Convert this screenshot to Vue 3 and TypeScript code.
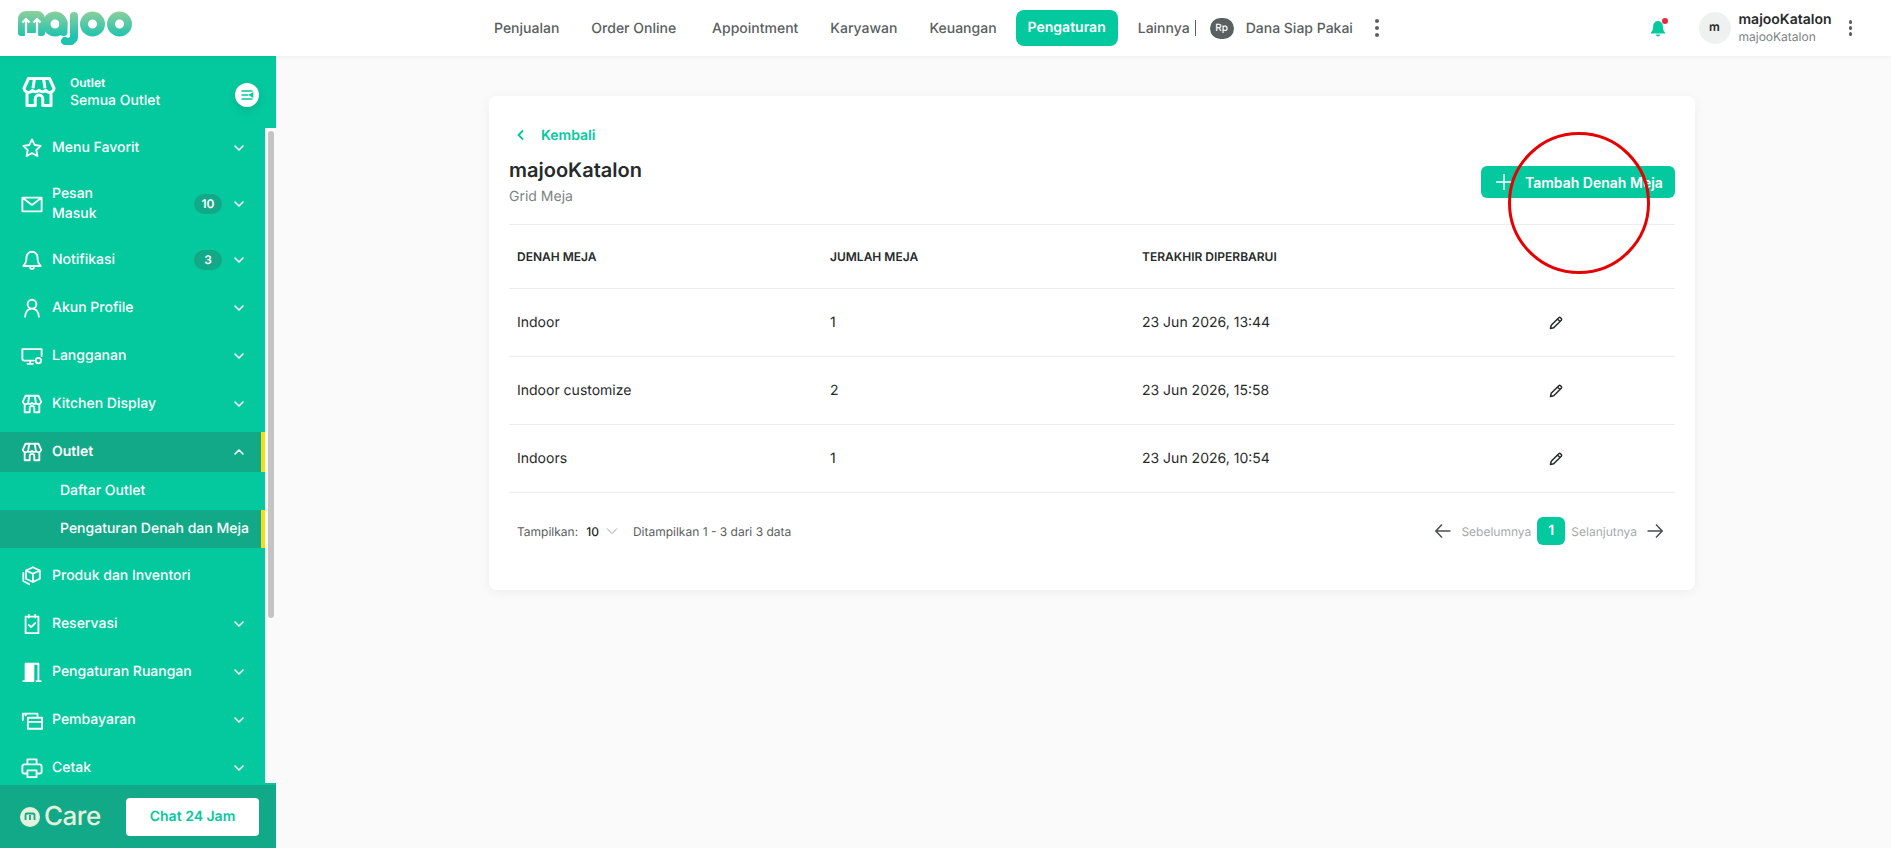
<script setup lang="ts">
interface MenuItem {
  label: string;
  icon: string;
  chevron?: boolean;
  badge?: string;
  wrap?: boolean;
}

const topNav = ['Penjualan', 'Order Online', 'Appointment', 'Karyawan', 'Keuangan'];

const upperMenu: MenuItem[] = [
  { label: 'Menu Favorit', icon: 'star', chevron: true },
  { label: 'Pesan Masuk', icon: 'mail', chevron: true, badge: '10', wrap: true },
  { label: 'Notifikasi', icon: 'bell', chevron: true, badge: '3' },
  { label: 'Akun Profile', icon: 'user', chevron: true },
  { label: 'Langganan', icon: 'monitor', chevron: true },
  { label: 'Kitchen Display', icon: 'store', chevron: true }
];

const lowerMenu: MenuItem[] = [
  { label: 'Produk dan Inventori', icon: 'box' },
  { label: 'Reservasi', icon: 'clip', chevron: true },
  { label: 'Pengaturan Ruangan', icon: 'door', chevron: true },
  { label: 'Pembayaran', icon: 'card', chevron: true },
  { label: 'Cetak', icon: 'print', chevron: true }
];

const iconPaths: Record<string, string> = {
  star: 'M12 2.600l2.900 6.100 6.600.9-4.800 4.600 1.200 6.600L12 17.600l-5.900 3.200 1.200-6.600-4.800-4.600 6.600-.9z',
  mail: 'M1.500 5h21v15h-21zM2 5.500l10 7.500 10-7.500',
  bell: 'M12 3a6 6 0 0 0-6 6c0 5-1 7-3.500 9.500h19C19 16 18 14 18 9a6 6 0 0 0-6-6zM10 20.500a2.200 2.200 0 0 0 4 0',
  user: 'M12 3a4.800 4.800 0 1 0 0 9.600A4.800 4.800 0 0 0 12 3zM4.500 21.500c.5-5.500 3.500-8.900 7.500-8.900s7 3.400 7.500 8.900',
  monitor: 'M14 17H3.500a2 2 0 0 1-2-2V4.500h21V12M7 20.500h6M10 17v3.500M19 14a3 3 0 1 0 0 6 3 3 0 0 0 0-6z',
  store: 'M5 3h14l3 6.500a3 3 0 0 1-5.500 1.400 3.400 3.400 0 0 1-4.500 0 3.400 3.400 0 0 1-4.500 0A3 3 0 0 1 2 9.500zM4 12.500V21h5.500v-4.500a2.500 2.500 0 0 1 5 0V21H20v-8.500M9 3L8 9.500M15 3l1 6.500',
  box: 'M13 2.500l7.500 3.500v9L13 18.500 5.500 15V6zM5.500 6l7.500 3.500L20.500 6M13 9.500v9M2.500 8.500v9l6.500 3.500',
  clip: 'M5 4h14v18H5zM8.500 2v3M15.500 2v3M8.500 13l2.500 2.500 4.500-4.500',
  door: 'M13.500 3H19v18.500M2.500 22h10M17 22h4.500',
  card: 'M7.500 9.500H23v12H7.500zM7.500 14h15.500M2 12V5h16v2.500M5 5v2',
  print: 'M7 8V2.500h10V8M6.500 18H3.500A2 2 0 0 1 1.500 16v-5.500A2.500 2.500 0 0 1 4 8h16a2.500 2.500 0 0 1 2.500 2.500V16a2 2 0 0 1-2 2h-3M7 14.500h10V22H7z'
};

const rows = [
  { name: 'Indoor', count: 1, updated: '23 Jun 2026, 13:44' },
  { name: 'Indoor customize', count: 2, updated: '23 Jun 2026, 15:58' },
  { name: 'Indoors', count: 1, updated: '23 Jun 2026, 10:54' }
];
</script>

<template>
  <div class="page">
    <header class="topbar">
      <svg class="logo" viewBox="0 0 120 34" width="120" height="34">
        <defs>
          <linearGradient id="logoGrad" gradientUnits="userSpaceOnUse" x1="0" y1="0" x2="0" y2="26">
            <stop offset="0" stop-color="#8fcf9c" />
            <stop offset="1" stop-color="#1cc4ae" />
          </linearGradient>
        </defs>
        <path fill="url(#logoGrad)" d="M2 22V8a8 8 0 0 1 8-8h11a8 8 0 0 1 8 8v14a3 3 0 0 1-3 3h-2a3 3 0 0 1-3-3H11a3 3 0 0 1-3 3H5a3 3 0 0 1-3-3z" />
        <g fill="none" stroke="url(#logoGrad)" stroke-width="8" stroke-linecap="round">
          <circle cx="39" cy="13" r="8.500" />
          <path d="M47.500 12v9" />
          <path d="M58 5v19a6 6 0 0 1-9 6" />
          <circle cx="76.500" cy="13" r="8.500" />
          <circle cx="103.500" cy="13" r="8.500" />
        </g>
        <g fill="none" stroke="#fff" stroke-width="2.200">
          <path d="M10 26V8M6.500 11.500L10 8l3.500 3.500" />
          <path d="M21 26V8M17.500 11.500L21 8l3.500 3.500" />
        </g>
      </svg>

      <nav class="topnav">
        <a v-for="item in topNav" :key="item" class="topnav-link">{{ item }}</a>
        <a class="topnav-link active">Pengaturan</a>
        <span class="topnav-more">Lainnya <i class="divider"></i></span>
        <span class="rp">Rp</span>
        <span class="topnav-dana">Dana Siap Pakai</span>
        <span class="dots"><i></i><i></i><i></i></span>
      </nav>

      <div class="top-right">
        <span class="bell">
          <svg viewBox="0 0 20 20" width="20" height="20">
            <path fill="#04c99e" d="M10 3a4.800 4.800 0 0 0-4.800 4.800c0 3.600-.7 5.300-2.200 6.700v1h14v-1c-1.500-1.400-2.200-3.100-2.200-6.700A4.800 4.800 0 0 0 10 3zM8 16.500a2 2 0 0 0 4 0z" />
          </svg>
          <i class="bell-dot"></i>
        </span>
        <span class="avatar">m</span>
        <div class="user-text">
          <div class="user-name">majooKatalon</div>
          <div class="user-sub">majooKatalon</div>
        </div>
        <span class="dots small"><i></i><i></i><i></i></span>
      </div>
    </header>

    <div class="body">
      <aside class="sidebar">
        <div class="outlet-box">
          <svg class="outlet-icon" viewBox="0 0 24 24" width="36" height="36">
            <path :d="iconPaths.store" />
          </svg>
          <div class="outlet-text">
            <div class="outlet-small">Outlet</div>
            <div class="outlet-name">Semua Outlet</div>
          </div>
          <span class="collapse-btn">
            <svg viewBox="0 0 16 16" width="16" height="16">
              <path d="M2.500 4h11M2.500 8h7M2.500 12h11" />
              <path d="M13.500 6.500L11 8l2.500 1.500z" />
            </svg>
          </span>
        </div>

        <div class="menu-wrap">
          <div class="menu">
            <div v-for="item in upperMenu" :key="item.label" class="menu-item">
              <svg class="menu-icon" viewBox="0 0 24 24" width="22" height="22"><path :d="iconPaths[item.icon]" /></svg>
              <span class="menu-label" :class="{ wrap: item.wrap }">{{ item.label }}</span>
              <span v-if="item.badge" class="badge">{{ item.badge }}</span>
              <svg v-if="item.chevron" class="chev" viewBox="0 0 12 12" width="12" height="12"><path d="M2 4l4 4 4-4" /></svg>
            </div>

            <div class="menu-group">
              <div class="menu-item current">
                <svg class="menu-icon" viewBox="0 0 24 24" width="22" height="22"><path :d="iconPaths.store" /></svg>
                <span class="menu-label bold">Outlet</span>
                <svg class="chev" viewBox="0 0 12 12" width="12" height="12"><path d="M2 8l4-4 4 4" /></svg>
              </div>
              <div class="sub-item">Daftar Outlet</div>
              <div class="sub-item current">Pengaturan Denah dan Meja</div>
            </div>

            <div v-for="item in lowerMenu" :key="item.label" class="menu-item">
              <svg class="menu-icon" viewBox="0 0 24 24" width="22" height="22">
                <path :d="iconPaths[item.icon]" />
                <path v-if="item.icon === 'door'" class="door-leaf" d="M5 22V3h8.500v19zM10.500 12v1.500" />
              </svg>
              <span class="menu-label">{{ item.label }}</span>
              <svg v-if="item.chevron" class="chev" viewBox="0 0 12 12" width="12" height="12"><path d="M2 4l4 4 4-4" /></svg>
            </div>
          </div>
          <div class="track"><div class="thumb"></div></div>
        </div>

        <div class="care">
          <span class="care-logo">
            <svg viewBox="0 0 20 20" width="20" height="20">
              <circle cx="10" cy="10" r="10" fill="#e4f1dc" />
              <path d="M5.500 13V8a1.500 1.500 0 0 1 1.500-1.500h5.500A2 2 0 0 1 14.500 8.500V13M10 8v5" fill="none" stroke="#12a988" stroke-width="1.800" />
            </svg>
            <span class="care-text">Care</span>
          </span>
          <a class="chat-btn">Chat 24 Jam</a>
        </div>
      </aside>

      <main class="main">
        <section class="card">
          <a class="back">
            <svg viewBox="0 0 12 12" width="12" height="12"><path d="M8 1.500L3.500 6 8 10.500" /></svg>
            Kembali
          </a>
          <div class="title-row">
            <div>
              <h1>majooKatalon</h1>
              <p>Grid Meja</p>
            </div>
            <button class="add-btn" type="button">
              <svg viewBox="0 0 16 16" width="16" height="16"><path d="M8 0v16M0 8h16" /></svg>
              Tambah Denah Meja
            </button>
          </div>

          <div class="table">
            <div class="tr head">
              <div>Denah Meja</div>
              <div>Jumlah Meja</div>
              <div>Terakhir Diperbarui</div>
              <div></div>
            </div>
            <div v-for="row in rows" :key="row.name" class="tr">
              <div>{{ row.name }}</div>
              <div>{{ row.count }}</div>
              <div>{{ row.updated }}</div>
              <div class="edit">
                <svg viewBox="0 0 16 16" width="16" height="16">
                  <path d="M2.500 13.500l.7-3.200 7.600-7.600a1.200 1.200 0 0 1 1.700 0l.800.800a1.200 1.200 0 0 1 0 1.700l-7.600 7.600zM9.500 4l2.500 2.500" />
                </svg>
              </div>
            </div>
          </div>

          <div class="pager">
            <span class="muted">Tampilkan:</span>
            <span class="size">10</span>
            <svg class="size-chev" viewBox="0 0 12 12" width="12" height="12"><path d="M1 3.500l5 5 5-5" /></svg>
            <span class="muted">Ditampilkan 1 - 3 dari 3 data</span>
            <span class="spacer"></span>
            <svg class="arrow" viewBox="0 0 16 16" width="16" height="16"><path d="M15.500 8H.8M7 1.500L.8 8 7 14.500" /></svg>
            <span class="page-text first">Sebelumnya</span>
            <span class="page-num">1</span>
            <span class="page-text">Selanjutnya</span>
            <svg class="arrow last" viewBox="0 0 16 16" width="16" height="16"><path d="M.5 8h14.700M9 1.500L15.200 8 9 14.500" /></svg>
          </div>

          <div class="red-ring"></div>
        </section>
      </main>
    </div>
  </div>
</template>

<style>
html,
body {
  margin: 0;
  overflow: hidden;
}
</style>

<style scoped>
.page {
  width: 1891px;
  height: 848px;
  display: flex;
  flex-direction: column;
  background: #fafafa;
  font-family: Inter, "Noto Sans", sans-serif;
  text-rendering: geometricPrecision;
  color: #272a2a;
  overflow: hidden;
}

.topbar {
  height: 56px;
  flex: none;
  display: flex;
  align-items: center;
  background: #fff;
  box-shadow: 0 1px 4px rgba(0, 0, 0, 0.06);
  position: relative;
  z-index: 2;
}

.logo {
  margin-left: 16px;
  flex: none;
}

.topnav {
  display: flex;
  align-items: center;
  margin-left: 358px;
  font-size: 14px;
  font-weight: 500;
  color: #5a6060;
}

.topnav-link {
  margin-right: 32px;
  white-space: nowrap;
}

.topnav-link:nth-child(2) {
  margin-right: 36px;
}

.topnav-link.active {
  margin-left: -13px;
  margin-right: 20px;
  padding: 0 12px;
  height: 36px;
  line-height: 36px;
  border-radius: 8px;
  background: #04c99e;
  color: #fff;
  font-weight: 600;
}

.topnav-more {
  display: flex;
  align-items: center;
  gap: 5px;
  white-space: nowrap;
}

.divider {
  width: 1px;
  height: 16px;
  background: #5a6060;
}

.rp {
  margin-left: 14px;
  width: 24px;
  height: 21px;
  border-radius: 12px;
  background: #5a6060;
  color: #fff;
  font-size: 10px;
  line-height: 21px;
  text-align: center;
}

.topnav-dana {
  margin-left: 12px;
  white-space: nowrap;
}

.dots {
  margin-left: 22px;
  display: flex;
  flex-direction: column;
  gap: 3px;
}

.dots i {
  width: 4px;
  height: 4px;
  border-radius: 50%;
  background: #5a6060;
}

.dots.small {
  margin-left: 0;
  gap: 2.500px;
}

.dots.small i {
  width: 3.500px;
  height: 3.500px;
}

.top-right {
  margin-left: auto;
  display: flex;
  align-items: center;
  padding-right: 39px;
}

.bell {
  position: relative;
  display: flex;
  margin-right: 31px;
}

.bell-dot {
  position: absolute;
  top: 0;
  right: 0;
  width: 6px;
  height: 6px;
  border-radius: 50%;
  background: #e8283c;
}

.avatar {
  width: 32px;
  height: 32px;
  border-radius: 50%;
  background: #eff1f1;
  font-size: 12px;
  font-weight: 600;
  line-height: 30px;
  text-align: center;
}

.user-text {
  margin-left: 8px;
  width: 110px;
}

.user-name {
  font-size: 14px;
  font-weight: 600;
  line-height: 18px;
}

.user-sub {
  font-size: 12px;
  line-height: 16px;
  color: #7c8383;
}

.body {
  flex: 1;
  min-height: 0;
  display: flex;
}

.sidebar {
  width: 276px;
  flex: none;
  display: flex;
  flex-direction: column;
  background: #04c99e;
  color: #fff;
  font-size: 14px;
  font-weight: 500;
}

.outlet-box {
  height: 72px;
  flex: none;
  display: flex;
  align-items: center;
  padding: 0 17px 0 21px;
  box-sizing: border-box;
}

.outlet-icon {
  fill: none;
  stroke: #fff;
  stroke-width: 2;
  stroke-linejoin: round;
  flex: none;
}

.outlet-text {
  margin-left: 13px;
  flex: 1;
}

.outlet-small {
  font-size: 12px;
  font-weight: 600;
  line-height: 18px;
}

.outlet-name {
  font-size: 14px;
  line-height: 18px;
}

.collapse-btn {
  width: 24px;
  height: 24px;
  margin-top: 6px;
  border-radius: 50%;
  background: #fff;
  box-shadow: 0 3px 8px rgba(0, 0, 0, 0.12);
  display: flex;
  align-items: center;
  justify-content: center;
}

.collapse-btn path {
  stroke: #04c99e;
  stroke-width: 1.600;
  fill: #04c99e;
}

.menu-wrap {
  height: 655px;
  flex: none;
  display: flex;
  overflow: hidden;
}

.menu {
  width: 265px;
  flex: none;
  display: flex;
  flex-direction: column;
  gap: 8px;
}

.track {
  flex: 1;
  background: #fafafa;
  padding: 3px 2px 0 3px;
}

.thumb {
  height: 487px;
  border-radius: 3px;
  background: #c4c4c4;
}

.menu-item {
  min-height: 40px;
  flex: none;
  display: flex;
  align-items: center;
  padding: 0 20px 0 21px;
  box-sizing: border-box;
}

.menu-icon {
  flex: none;
  fill: none;
  stroke: #fff;
  stroke-width: 2;
  stroke-linejoin: round;
  stroke-linecap: round;
}

.door-leaf {
  fill: #fff;
}

.menu-label {
  margin-left: 9px;
  margin-right: auto;
  white-space: nowrap;
  line-height: 20px;
}

.menu-label.wrap {
  width: 60px;
  white-space: normal;
  padding: 8px 0;
}

.menu-label.bold {
  font-weight: 600;
}

.badge {
  min-width: 28px;
  height: 20px;
  border-radius: 10px;
  background: #12a988;
  font-size: 12px;
  font-weight: 600;
  line-height: 20px;
  text-align: center;
  margin-right: 11px;
}

.chev {
  flex: none;
  fill: none;
  stroke: #fff;
  stroke-width: 1.600;
  stroke-linecap: round;
  stroke-linejoin: round;
}

.menu-group {
  display: flex;
  flex-direction: column;
}

.menu-item.current,
.sub-item.current {
  background: #12a988;
  box-shadow: inset -4px 0 0 #f6dc14;
}

.sub-item {
  height: 38px;
  line-height: 38px;
  padding-left: 60px;
  white-space: nowrap;
}

.care {
  flex: 1;
  display: flex;
  align-items: center;
  justify-content: space-between;
  padding: 0 17px 0 20px;
  margin-top: 2px;
  background: #12a988;
}

.care-logo {
  display: flex;
  align-items: center;
  gap: 4px;
}

.care-text {
  font-size: 26px;
  font-weight: 500;
  letter-spacing: -0.5px;
  line-height: 32px;
  color: #e4f1dc;
}

.chat-btn {
  width: 133px;
  height: 38px;
  border-radius: 4px;
  background: #fff;
  color: #04c99e;
  font-weight: 600;
  line-height: 38px;
  text-align: center;
}

.main {
  flex: 1;
  padding: 40px 196px 0 213px;
  min-width: 0;
}

.card {
  position: relative;
  height: 494px;
  box-sizing: border-box;
  padding: 29px 20px 0;
  border-radius: 8px;
  background: #fff;
  box-shadow: 0 2px 12px rgba(0, 0, 0, 0.05);
}

.back {
  display: flex;
  align-items: center;
  gap: 14px;
  padding-left: 6px;
  height: 20px;
  font-size: 14px;
  font-weight: 600;
  color: #04c99e;
}

.back svg {
  fill: none;
  stroke: #04c99e;
  stroke-width: 1.800;
}

.title-row {
  display: flex;
  justify-content: space-between;
  align-items: flex-start;
  height: 79px;
}

h1 {
  margin: 11px 0 0;
  font-size: 20px;
  font-weight: 600;
  line-height: 28px;
}

.title-row p {
  margin: 4px 0 0;
  font-size: 14px;
  line-height: 18px;
  color: #7c8383;
}

.add-btn {
  width: 194px;
  height: 32px;
  margin-top: 21px;
  border: 0;
  border-radius: 6px;
  background: #04c99e;
  color: #fff;
  font: 600 14px Inter, sans-serif;
  display: flex;
  align-items: center;
  padding: 0 0 0 15px;
  gap: 13px;
  white-space: nowrap;
}

.add-btn svg {
  flex: none;
  stroke: #fff;
  stroke-width: 1.500;
}

.tr {
  display: grid;
  grid-template-columns: 313px 312px 406px 1fr;
  align-items: center;
  height: 68px;
  padding-left: 8px;
  border-bottom: 1px solid #eceeee;
  box-sizing: border-box;
  font-size: 14px;
}

.tr.head {
  height: 65px;
  border-top: 1px solid #eceeee;
  font-size: 12px;
  font-weight: 600;
  text-transform: uppercase;
}

.edit svg {
  display: block;
  fill: none;
  stroke: #272a2a;
  stroke-width: 1.500;
  stroke-linejoin: round;
}

.pager {
  display: flex;
  align-items: center;
  padding: 0 12px 0 8px;
  height: 28px;
  margin-top: 24px;
  font-size: 12px;
}

.muted {
  color: #5a6060;
}

.size {
  margin-left: 8px;
  color: #272a2a;
  font-weight: 500;
}

.size-chev {
  margin: 0 15px 0 7px;
  fill: none;
  stroke: #9aa0a0;
  stroke-width: 1;
}

.spacer {
  flex: 1;
}

.arrow {
  fill: none;
  stroke: #4a4f4f;
  stroke-width: 1.500;
}

.arrow.last {
  margin-left: 10px;
}

.page-text {
  color: #a5aaaa;
}

.page-text.first {
  margin-left: 10px;
}

.page-num {
  width: 28px;
  height: 28px;
  margin: 0 6px;
  border-radius: 6px;
  background: #04c99e;
  color: #fff;
  font-size: 14px;
  font-weight: 600;
  line-height: 28px;
  text-align: center;
}

.red-ring {
  position: absolute;
  left: 1019px;
  top: 36px;
  width: 136px;
  height: 136px;
  border: 3px solid #e60000;
  border-radius: 50%;
  pointer-events: none;
}
</style>
